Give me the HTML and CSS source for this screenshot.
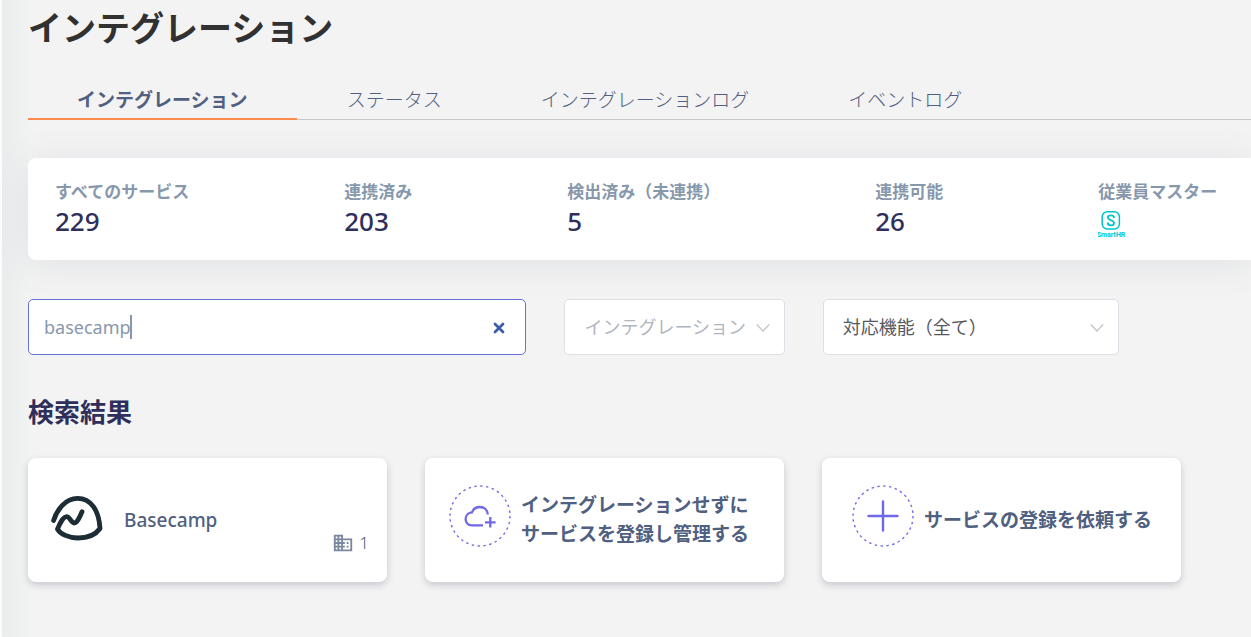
FILE: index.html
```html
<!DOCTYPE html>
<html lang="ja">
<head>
<meta charset="utf-8">
<meta name="viewport" content="width=device-width, initial-scale=1">
<title>インテグレーション</title>
<link rel="stylesheet" href="styles.css">
</head>
<body>
<main class="page">
  <h1 class="page-title">インテグレーション</h1>

  <nav class="tabs">
    <a class="tab tab-active" href="#integration" aria-current="page">インテグレーション</a>
    <a class="tab" href="#status">ステータス</a>
    <a class="tab" href="#integration-log">インテグレーションログ</a>
    <a class="tab" href="#event-log">イベントログ</a>
  </nav>

  <dl class="stats">
    <div class="stat"><dt>すべてのサービス</dt><dd>229</dd></div>
    <div class="stat"><dt>連携済み</dt><dd>203</dd></div>
    <div class="stat"><dt>検出済み（未連携）</dt><dd>5</dd></div>
    <div class="stat"><dt>連携可能</dt><dd>26</dd></div>
    <div class="stat">
      <dt>従業員マスター</dt>
      <dd>
        <svg class="smarthr" viewBox="0 0 28 34" role="img" aria-label="SmartHR">
          <rect x="4.200" y="5.700" width="17.200" height="17.200" rx="5" fill="none" stroke="#00c4cc" stroke-width="1.500"/>
          <path d="M15.900 12.100v-.6c0-1.400-1.300-2.200-3-2.200s-3.100.8-3.100 2.300c0 1.600 1.500 2 3.100 2.600s3.100 1.100 3.100 2.700-1.300 2.400-3.100 2.400-3.100-.8-3.100-2.300v-.5" fill="none" stroke="#00c4cc" stroke-width="1.800"/>
          <text x="13" y="31" text-anchor="middle" class="smarthr-name">SmartHR</text>
        </svg>
      </dd>
    </div>
  </dl>

  <form class="filters">
    <div class="field search">
      <input class="control" type="text" value="basecamp" aria-label="サービスを検索">
      <span class="caret"></span>
      <button class="clear" type="button" aria-label="クリア">
        <svg viewBox="0 0 12 12" width="12" height="12"><path d="M2 2l8 8M10 2l-8 8" stroke="#3a5fa5" stroke-width="2.800" stroke-linecap="round"/></svg>
      </button>
    </div>
    <div class="field kind">
      <select class="control muted" aria-label="インテグレーション"><option>インテグレーション</option></select>
      <svg class="chevron" viewBox="0 0 14 10"><path d="M.8 1.500l6.200 6.500 6.200-6.500"/></svg>
    </div>
    <div class="field feature">
      <select class="control" aria-label="対応機能"><option>対応機能（全て）</option></select>
      <svg class="chevron" viewBox="0 0 14 10"><path d="M.8 1.500l6.200 6.500 6.200-6.500"/></svg>
    </div>
  </form>

  <h2 class="section-title">検索結果</h2>

  <div class="cards">
    <a class="card" href="#basecamp">
      <svg class="basecamp" viewBox="0 0 52 46" aria-hidden="true">
        <path d="M2.600 25.500C6 14.500 14.500 3.400 26.500 3.400 40 3.400 48 15.500 49 33.500 44 40.500 36 43 27 43 17.500 43 9.500 39 6.500 34.200 8.500 29 12.500 21.700 15.500 21.700c3.500 0 4.500 6.300 7.700 6.300 3 0 5.500-6 7.800-11.300"/>
      </svg>
      <span class="card-name">Basecamp</span>
      <span class="card-count">
        <svg viewBox="0 0 24 24" width="22" height="22" aria-hidden="true"><path fill="#7b879d" d="M12 7V3H2v18h20V7H12zM6 19H4v-2h2v2zm0-4H4v-2h2v2zm0-4H4V9h2v2zm0-4H4V5h2v2zm4 12H8v-2h2v2zm0-4H8v-2h2v2zm0-4H8V9h2v2zm0-4H8V5h2v2zm10 12h-8v-2h2v-2h-2v-2h2v-2h-2V9h8v10zm-2-8h-2v2h2v-2zm0 4h-2v2h2v-2z"/></svg>
        1
      </span>
    </a>
    <button class="card card-action" type="button">
      <svg class="round-icon" viewBox="0 0 62 62" aria-hidden="true">
        <circle class="dots" cx="31" cy="31" r="30"/>
        <path d="M34 40.300H22.800c-3.700 0-6.200-2.800-6.200-6.300s2.600-6.400 6.400-6.700c1.200-3.100 4-5.300 7.800-5.300 4.600 0 7.700 3 8 7.500" stroke-width="2.300"/>
        <path d="M36 37.300h10.600M41.300 32v10.600" stroke-width="2.300"/>
      </svg>
      <span class="card-label">インテグレーションせずに<br>サービスを登録し管理する</span>
    </button>
    <button class="card card-request" type="button">
      <svg class="round-icon" viewBox="0 0 62 62" aria-hidden="true">
        <circle class="dots" cx="31" cy="31" r="30"/>
        <path d="M16.500 31h29M31 16.500v29" stroke-width="2.400" stroke-linecap="round"/>
      </svg>
      <span class="card-label">サービスの登録を依頼する</span>
    </button>
  </div>
</main>
</body>
</html>
```

FILE: styles.css
```css
* {
  box-sizing: border-box;
}

body {
  margin: 0;
  background: #f3f3f3;
  color: #313131;
  font-family: "Noto Sans", "Noto Sans CJK JP", sans-serif;
  font-size: 18px;
}

.page {
  min-height: 100vh;
  padding: 4px 0 40px 26px;
  border-left: 2px solid #fcfcfc;
  background: linear-gradient(to right, #eaeded, #f3f3f3 32px);
  overflow: hidden;
}

.page-title {
  margin: 0 0 28px;
  font-size: 34px;
  line-height: 48px;
}

.tabs {
  display: flex;
  gap: 1px;
  border-bottom: 1px solid #c8c8c8;
}

.tab {
  margin-bottom: -1px;
  padding: 2px 49px 0;
  border-bottom: 2px solid transparent;
  color: #506080;
  font-size: 19px;
  font-weight: 300;
  line-height: 36px;
  text-decoration: none;
  white-space: nowrap;
}

.tab-active {
  border-color: #ff8a4f;
  font-weight: 700;
}

.stats {
  display: flex;
  gap: 155px;
  margin: 38px 0 0;
  padding: 20px 27px 24px;
  border-radius: 8px 0 0 8px;
  background: #fff;
  box-shadow: 0 4px 36px rgba(90, 110, 130, 0.12);
  white-space: nowrap;
}

.stat dt {
  color: #8798ad;
  font-size: 17px;
  font-weight: 700;
  line-height: 28px;
}

.stat dd {
  height: 30px;
  margin: 0;
  color: #2e2f5b;
  font-size: 26px;
  font-weight: 500;
  line-height: 30px;
}

.smarthr {
  display: block;
  width: 28px;
  height: 34px;
}

.smarthr-name {
  fill: #00c4cc;
  font-family: Roboto, sans-serif;
  font-size: 7px;
  font-weight: 700;
}

.filters {
  display: flex;
  gap: 38px;
  margin-top: 39px;
  padding-right: 132px;
}

.field {
  position: relative;
  height: 56px;
}

.search {
  flex: 498 1 0;
}

.kind {
  flex: 220 1 0;
}

.feature {
  flex: 296 1 0;
}

.control {
  width: 100%;
  height: 100%;
  padding: 0 19px;
  border: 1px solid #dcdfe6;
  border-radius: 5px;
  outline: 0;
  appearance: none;
  background: #fff;
  color: #55585e;
  font: inherit;
}

.search .control {
  padding: 0 56px 0 15px;
  border-color: #6571dc;
  color: #8798ad;
}

.control.muted {
  color: #b0b6be;
}

.caret {
  position: absolute;
  top: 16px;
  left: 102px;
  width: 2px;
  height: 24px;
  background: #8798ad;
}

.clear {
  position: absolute;
  top: 17px;
  right: 15px;
  display: grid;
  place-items: center;
  width: 24px;
  height: 24px;
  padding: 0;
  border: 0;
  background: none;
}

.chevron {
  position: absolute;
  top: 24px;
  right: 15px;
  width: 14px;
  height: 10px;
  fill: none;
  stroke: #c0c4cc;
  stroke-width: 1.3;
  pointer-events: none;
}

.section-title {
  margin: 37px 0 26px;
  color: #2e2f5b;
  font-size: 26px;
  line-height: 40px;
}

.cards {
  display: grid;
  grid-template-columns: repeat(3, minmax(0, 1fr));
  gap: 38px;
  padding-right: 70px;
}

.card {
  position: relative;
  display: flex;
  align-items: center;
  min-height: 124px;
  padding: 0 0 0 23px;
  border: 0;
  border-radius: 8px;
  background: #fff;
  box-shadow: 0 3px 7px rgba(60, 65, 90, 0.24);
  color: #506080;
  font: inherit;
  text-align: left;
  text-decoration: none;
  white-space: nowrap;
}

.card-action {
  padding-left: 24px;
}

.card-request {
  padding-left: 30px;
}

.basecamp {
  flex: none;
  width: 52px;
  height: 46px;
  margin: 0 21px 4px 0;
  fill: none;
  stroke: #1d2d35;
  stroke-width: 4.8;
  stroke-linecap: round;
  stroke-linejoin: round;
}

.card-name {
  font-size: 19px;
  font-weight: 500;
}

.card-count {
  position: absolute;
  right: 18px;
  bottom: 28px;
  display: flex;
  align-items: center;
  gap: 5px;
  font-size: 17px;
  font-weight: 300;
  line-height: 22px;
}

.round-icon {
  flex: none;
  width: 62px;
  height: 62px;
  margin: 0 10px 8px 0;
  fill: none;
  stroke: #6f69e6;
}

.dots {
  stroke-width: 1.4;
  stroke-dasharray: 2.4 3.49;
}

.card-label {
  font-size: 19px;
  font-weight: 700;
  line-height: 29px;
}
```
